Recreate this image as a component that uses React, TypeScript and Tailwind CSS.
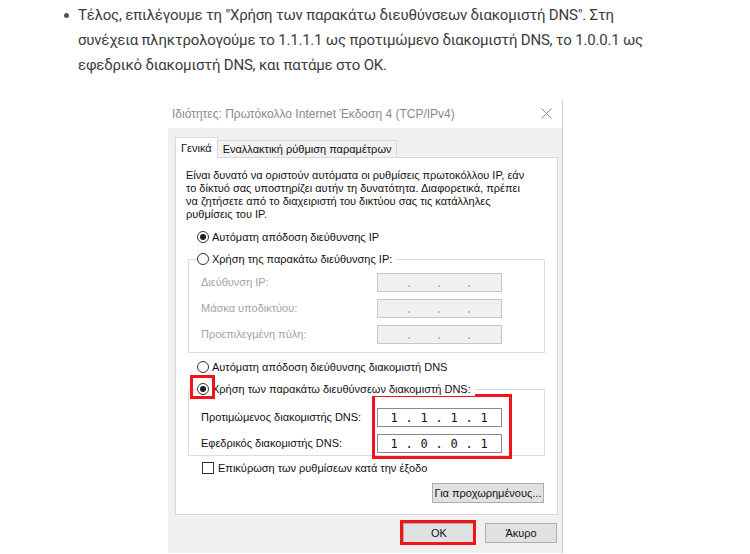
import { Fragment } from 'react'

function Radio({ checked = false }: { checked?: boolean }) {
  return (
    <span className="flex h-[12px] w-[12px] shrink-0 items-center justify-center rounded-full border border-[#333] bg-white">
      {checked && <span className="h-[6px] w-[6px] rounded-full bg-[#1f1f1f]" />}
    </span>
  )
}

function IpBox({ parts, disabled = false }: { parts: string[]; disabled?: boolean }) {
  return (
    <div
      className={`flex h-[19px] w-[125px] items-center border pl-[8px] font-['DejaVu_Sans_Mono',monospace] text-[12px] ${
        disabled ? 'border-[#c6c6c6] bg-[#f0f0f0] text-[#a8a8a8]' : 'border-[#8a8a8a] bg-white text-[#111]'
      }`}
    >
      {parts.map((p, i) => (
        <Fragment key={i}>
          {i > 0 && <span className="w-[14px] text-center">.</span>}
          <span className="w-[16px] text-center">{p}</span>
        </Fragment>
      ))}
    </div>
  )
}

function Button({ label, w }: { label: string; w: string }) {
  return (
    <div className={`flex h-[20px] ${w} items-center justify-center border border-[#adadad] bg-[#e1e1e1] text-[#111]`}>
      {label}
    </div>
  )
}

export default function App() {
  return (
    <div className="min-h-screen bg-white">
      {/* article text */}
      <div className="flex pt-[3px] font-['Roboto',sans-serif] text-[15px] leading-[25px] text-[#3c3c3c]">
        <span className="ml-[64px] mr-[9px] mt-[10px] h-[5px] w-[5px] shrink-0 rounded-full bg-[#555]" />
        <div className="tracking-[-0.2px]">
          <div>Τέλος, επιλέγουμε τη "Χρήση των παρακάτω διευθύνσεων διακομιστή DNS". Στη</div>
          <div>συνέχεια πληκτρολογούμε το 1.1.1.1 ως προτιμώμενο διακομιστή DNS, το 1.0.0.1 ως</div>
          <div>εφεδρικό διακομιστή DNS, και πατάμε στο OK.</div>
        </div>
      </div>

      {/* dialog screenshot */}
      <div className="ml-[168px] mt-[22px] w-[395px] border-r border-[#cfcfcf] font-['Liberation_Sans',sans-serif] text-[11px] text-[#111]">
        <div className="flex h-[28px] items-center justify-between pl-[4px] pr-[10px] text-[12px] text-[#8a8a8a]">
          <span>Ιδιότητες: Πρωτόκολλο Internet Έκδοση 4 (TCP/IPv4)</span>
          <svg width="11" height="11" viewBox="0 0 11 11" className="mt-[-2px]">
            <path d="M0.5 0.5 L10.5 10.5 M10.5 0.5 L0.5 10.5" stroke="#8a8a8a" strokeWidth="1" />
          </svg>
        </div>

        <div className="bg-[#f0f0f0] pb-[10px] pl-[7px] pr-[4px] pt-[9px]">
          {/* tabs */}
          <div className="flex items-end">
            <div className="relative z-10 -mb-px flex h-[21px] items-center border border-b-0 border-[#d9d9d9] bg-white px-[5px]">Γενικά</div>
            <div className="flex h-[17px] items-center border border-b-0 border-l-0 border-[#d9d9d9] bg-[#f2f2f2] px-[5px]">
              Εναλλακτική ρύθμιση παραμέτρων
            </div>
          </div>

          {/* panel */}
          <div className="flex flex-col border border-[#d9d9d9] bg-white pb-[11px] pt-[11px]">
            <div className="pl-[10px] leading-[13px]">
              Είναι δυνατό να οριστούν αυτόματα οι ρυθμίσεις πρωτοκόλλου IP, εάν
              <br />
              το δίκτυό σας υποστηρίζει αυτήν τη δυνατότητα. Διαφορετικά, πρέπει
              <br />
              να ζητήσετε από το διαχειριστή του δικτύου σας τις κατάλληλες
              <br />
              ρυθμίσεις του IP.
            </div>

            <div className="ml-[21px] mt-[9px] flex h-[14px] items-center gap-[3px]">
              <Radio checked />
              <span>Αυτόματη απόδοση διεύθυνσης IP</span>
            </div>

            {/* IP group */}
            <div className="mx-[12px] mt-[8px] flex flex-col items-start">
              <div className="relative z-10 ml-[9px] flex h-[14px] items-center gap-[3px] bg-white pr-[4px]">
                <Radio />
                <span>Χρήση της παρακάτω διεύθυνσης IP:</span>
              </div>
              <div className="-mt-[7px] flex w-full flex-col gap-[7px] border border-[#dcdcdc] pb-[8px] pl-[12px] pr-[42px] pt-[13px] text-[#a3a3a3]">
                {['Διεύθυνση IP:', 'Μάσκα υποδικτύου:', 'Προεπιλεγμένη πύλη:'].map((l) => (
                  <div key={l} className="flex h-[19px] items-center justify-between">
                    <span>{l}</span>
                    <IpBox parts={['', '', '', '']} disabled />
                  </div>
                ))}
              </div>
            </div>

            <div className="ml-[21px] mt-[7px] flex h-[14px] items-center gap-[3px]">
              <Radio />
              <span>Αυτόματη απόδοση διεύθυνσης διακομιστή DNS</span>
            </div>

            {/* DNS group */}
            <div className="mx-[12px] mt-[8px] flex flex-col items-start">
              <div className="relative z-10 ml-[9px] flex h-[14px] items-center gap-[3px] bg-white pr-[4px]">
                <span className="relative">
                  <Radio checked />
                  <span className="absolute -left-[7px] -top-[8px] h-[24px] w-[25px] border-[3px] border-[#f2131b]" />
                </span>
                <span>Χρήση των παρακάτω διευθύνσεων διακομιστή DNS:</span>
              </div>
              <div className="-mt-[7px] flex w-full justify-between border border-[#dcdcdc] pb-[2px] pl-[12px] pr-[42px] pt-[18px]">
                <div className="flex flex-col gap-[7px]">
                  <div className="flex h-[19px] items-center">Προτιμώμενος διακομιστής DNS:</div>
                  <div className="flex h-[19px] items-center">Εφεδρικός διακομιστής DNS:</div>
                </div>
                <div className="relative flex flex-col gap-[7px]">
                  <IpBox parts={['1', '1', '1', '1']} />
                  <IpBox parts={['1', '0', '0', '1']} />
                  <span className="absolute -bottom-[6px] -left-[5px] -right-[10px] -top-[14px] border-[3px] border-[#f2131b]" />
                </div>
              </div>
            </div>

            <div className="ml-[26px] mt-[5px] flex h-[14px] items-center gap-[4px]">
              <span className="h-[12px] w-[12px] border border-[#333] bg-white" />
              <span>Επικύρωση των ρυθμίσεων κατά την έξοδο</span>
            </div>

            <div className="mr-[13px] mt-[8px] flex justify-end">
              <Button label="Για προχωρημένους..." w="w-[112px]" />
            </div>
          </div>

          {/* dialog buttons */}
          <div className="mt-[8px] flex justify-end gap-[10px] pr-px">
            <div className="relative">
              <Button label="OK" w="w-[72px]" />
              <span className="absolute -bottom-[2px] -left-[3px] -right-[1px] -top-[3px] border-[3px] border-[#f2131b]" />
            </div>
            <Button label="Άκυρο" w="w-[72px]" />
          </div>
        </div>
      </div>
    </div>
  )
}
